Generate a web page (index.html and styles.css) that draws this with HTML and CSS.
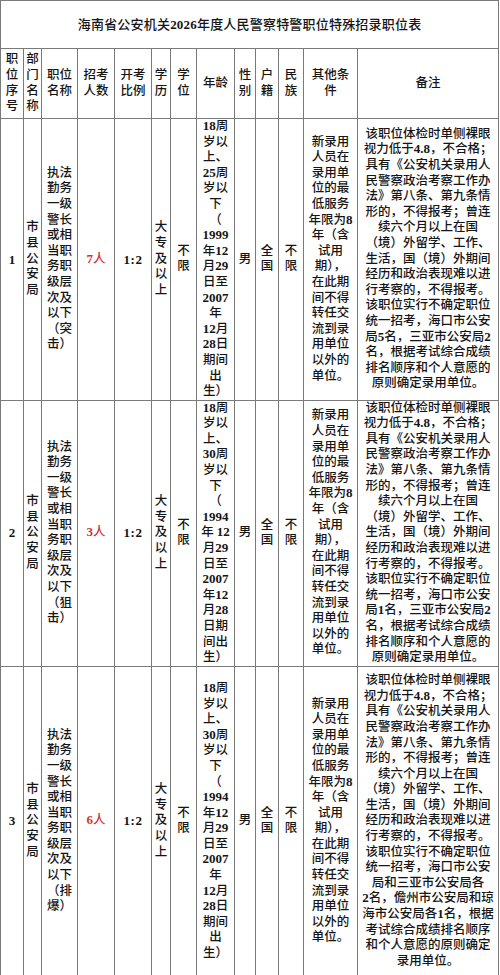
FILE: index.html
```html
<!DOCTYPE html>
<html lang="zh-CN">
<head>
<meta charset="utf-8">
<title>海南省公安机关2026年度人民警察特警职位特殊招录职位表</title>
<link rel="stylesheet" href="styles.css">
</head>
<body>
<table class="sheet">
  <colgroup>
    <col class="c-no"><col class="c-dept"><col class="c-name"><col class="c-num"><col class="c-ratio">
    <col class="c-edu"><col class="c-deg"><col class="c-age"><col class="c-sex"><col class="c-hk">
    <col class="c-eth"><col class="c-other"><col class="c-note">
  </colgroup>
  <tr class="r-title">
    <td colspan="13" class="title">海南省公安机关<b class="d">2026</b>年度人民警察特警职位特殊招录职位表</td>
  </tr>
  <tr class="r-head">
    <th>职<br>位<br>序<br>号</th>
    <th>部<br>门<br>名<br>称</th>
    <th>职位<br>名称</th>
    <th>招考<br>人数</th>
    <th>开考<br>比例</th>
    <th>学<br>历</th>
    <th>学<br>位</th>
    <th>年龄</th>
    <th>性<br>别</th>
    <th>户<br>籍</th>
    <th>民<br>族</th>
    <th>其他条<br>件</th>
    <th>备注</th>
  </tr>
  <tr class="r1">
    <td class="num">1</td>
    <td>市<br>县<br>公<br>安<br>局</td>
    <td>执法<br>勤务<br>一级<br>警长<br>或相<br>当职<br>务职<br>级层<br>次及<br>以下<br>（突<br>击）</td>
    <td class="red"><b class="d">7</b>人</td>
    <td class="ratio">1:2</td>
    <td>大<br>专<br>及<br>以<br>上</td>
    <td>不<br>限</td>
    <td><b class="d">18</b>周<br>岁以<br>上、<br><b class="d">25</b>周<br>岁以<br>下<br>（<br><b class="d">1999</b><br>年<b class="d">12</b><br>月<b class="d">29</b><br>日至<br><b class="d">2007</b><br>年<br><b class="d">12</b>月<br><b class="d">28</b>日<br>期间<br>出<br>生）</td>
    <td>男</td>
    <td>全<br>国</td>
    <td>不<br>限</td>
    <td>新录用<br>人员在<br>录用单<br>位的最<br>低服务<br>年限为<b class="d">8</b><br>年（含<br>试用<br>期），<br>在此期<br>间不得<br>转任交<br>流到录<br>用单位<br>以外的<br>单位。</td>
    <td>该职位体检时单侧裸眼<br>视力低于<b class="d">4.8</b>，不合格；<br>具有《公安机关录用人<br>民警察政治考察工作办<br>法》第八条、第九条情<br>形的，不得报考；曾连<br>续六个月以上在国<br>（境）外留学、工作、<br>生活，国（境）外期间<br>经历和政治表现难以进<br>行考察的，不得报考。<br>该职位实行不确定职位<br>统一招考，海口市公安<br>局<b class="d">5</b>名，三亚市公安局<b class="d">2</b><br>名，根据考试综合成绩<br>排名顺序和个人意愿的<br>原则确定录用单位。</td>
  </tr>
  <tr class="r2">
    <td class="num">2</td>
    <td>市<br>县<br>公<br>安<br>局</td>
    <td>执法<br>勤务<br>一级<br>警长<br>或相<br>当职<br>务职<br>级层<br>次及<br>以下<br>（狙<br>击）</td>
    <td class="red"><b class="d">3</b>人</td>
    <td class="ratio">1:2</td>
    <td>大<br>专<br>及<br>以<br>上</td>
    <td>不<br>限</td>
    <td><b class="d">18</b>周<br>岁以<br>上、<br><b class="d">30</b>周<br>岁以<br>下<br>（<br><b class="d">1994</b><br>年 <b class="d">12</b><br>月<b class="d">29</b><br>日至<br><b class="d">2007</b><br>年<b class="d">12</b><br>月<b class="d">28</b><br>日期<br>间出<br>生）</td>
    <td>男</td>
    <td>全<br>国</td>
    <td>不<br>限</td>
    <td>新录用<br>人员在<br>录用单<br>位的最<br>低服务<br>年限为<b class="d">8</b><br>年（含<br>试用<br>期），<br>在此期<br>间不得<br>转任交<br>流到录<br>用单位<br>以外的<br>单位。</td>
    <td>该职位体检时单侧裸眼<br>视力低于<b class="d">4.8</b>，不合格；<br>具有《公安机关录用人<br>民警察政治考察工作办<br>法》第八条、第九条情<br>形的，不得报考；曾连<br>续六个月以上在国<br>（境）外留学、工作、<br>生活，国（境）外期间<br>经历和政治表现难以进<br>行考察的，不得报考。<br>该职位实行不确定职位<br>统一招考，海口市公安<br>局<b class="d">1</b>名，三亚市公安局<b class="d">2</b><br>名，根据考试综合成绩<br>排名顺序和个人意愿的<br>原则确定录用单位。</td>
  </tr>
  <tr class="r3">
    <td class="num">3</td>
    <td>市<br>县<br>公<br>安<br>局</td>
    <td>执法<br>勤务<br>一级<br>警长<br>或相<br>当职<br>务职<br>级层<br>次及<br>以下<br>（排<br>爆）</td>
    <td class="red"><b class="d">6</b>人</td>
    <td class="ratio">1:2</td>
    <td>大<br>专<br>及<br>以<br>上</td>
    <td>不<br>限</td>
    <td><b class="d">18</b>周<br>岁以<br>上、<br><b class="d">30</b>周<br>岁以<br>下<br>（<br><b class="d">1994</b><br>年<b class="d">12</b><br>月<b class="d">29</b><br>日至<br><b class="d">2007</b><br>年<br><b class="d">12</b>月<br><b class="d">28</b>日<br>期间<br>出<br>生）</td>
    <td>男</td>
    <td>全<br>国</td>
    <td>不<br>限</td>
    <td>新录用<br>人员在<br>录用单<br>位的最<br>低服务<br>年限为<b class="d">8</b><br>年（含<br>试用<br>期），<br>在此期<br>间不得<br>转任交<br>流到录<br>用单位<br>以外的<br>单位。</td>
    <td>该职位体检时单侧裸眼<br>视力低于<b class="d">4.8</b>，不合格；<br>具有《公安机关录用人<br>民警察政治考察工作办<br>法》第八条、第九条情<br>形的，不得报考；曾连<br>续六个月以上在国<br>（境）外留学、工作、<br>生活，国（境）外期间<br>经历和政治表现难以进<br>行考察的，不得报考。<br>该职位实行不确定职位<br>统一招考，海口市公安<br>局和三亚市公安局各<br><b class="d">2</b>名，儋州市公安局和琼<br>海市公安局各<b class="d">1</b>名，根据<br>考试综合成绩排名顺序<br>和个人意愿的原则确定<br>录用单位。</td>
  </tr>
</table>
</body>
</html>
```
FILE: styles.css
```css
html, body {
  margin: 0;
  padding: 0;
  background: #ffffff;
}

.sheet {
  border-collapse: collapse;
  table-layout: fixed;
  width: 498px;
  font-family: "Liberation Serif", "Noto Sans CJK SC", serif;
  font-size: 12.5px;
  line-height: 15.6px;
  color: #151515;
}

.sheet td,
.sheet th {
  border: 1px solid #7a7a7a;
  padding: 0;
  text-align: center;
  vertical-align: middle;
  white-space: nowrap;
  overflow: hidden;
  font-weight: 500;
}

.c-no { width: 23px; }
.c-dept { width: 18px; }
.c-name { width: 36px; }
.c-num { width: 37px; }
.c-ratio { width: 37px; }
.c-edu { width: 19px; }
.c-deg { width: 26px; }
.c-age { width: 38px; }
.c-sex { width: 21px; }
.c-hk { width: 23px; }
.c-eth { width: 25px; }
.c-other { width: 54px; }
.c-note { width: 141px; }

.r-title { height: 48px; }
.r-head { height: 70px; }
.r1 { height: 280px; }
.r2 { height: 265px; }
.r3 { height: 310px; }

.sheet .title {
  font-size: 13px;
  letter-spacing: 0.2px;
}

.d {
  font-weight: 700;
  font-size: 13px;
  line-height: 0;
}

.sheet .num {
  font-weight: 700;
  font-size: 13px;
}

.sheet .red {
  color: #c93a36;
}

.sheet .ratio {
  font-weight: 700;
  font-size: 13px;
  letter-spacing: 0.5px;
}
```
